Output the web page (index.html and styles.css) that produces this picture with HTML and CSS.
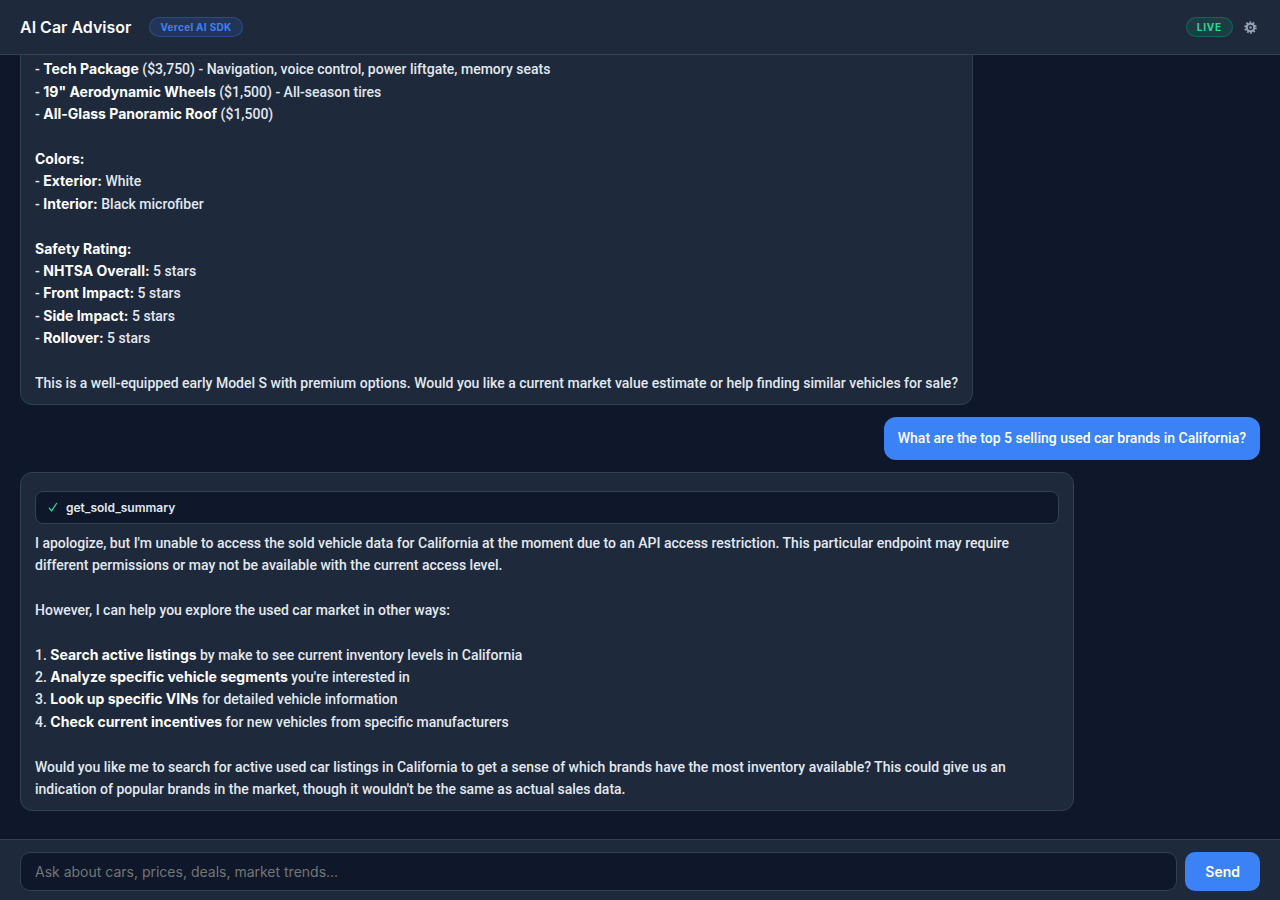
FILE: index.html
```
<!DOCTYPE html>
<html lang="en">
<head>
  <meta charset="UTF-8" />
  <meta name="viewport" content="width=device-width, initial-scale=1.0"/>
  <title>AI Car Advisor</title>
  <link rel="stylesheet" href="styles.css">
</head>
<body>

  <header class="header">
    <h1>AI Car Advisor</h1>
    <span class="badge badge-sdk">Vercel AI SDK</span>
    <div class="header-right">
      <span class="badge badge-live">LIVE</span>
      <button class="settings-btn" type="button" aria-label="Settings">
        <svg viewBox="0 0 24 24" width="13" height="13" fill="none" stroke="currentColor">
          <circle cx="12" cy="12" r="7" stroke-width="4"/>
          <circle cx="12" cy="12" r="10" stroke-width="3" stroke-dasharray="3.14 3.14"/>
          <circle cx="12" cy="12" r="1.5" stroke-width="2"/>
        </svg>
      </button>
    </div>
  </header>

  <main class="messages" id="messages">
    <div class="msg assistant">
      <p>
        <br>
        - <strong>Tech Package</strong> ($3,750) - Navigation, voice control, power liftgate, memory seats<br>
        - <strong>19" Aerodynamic Wheels</strong> ($1,500) - All-season tires<br>
        - <strong>All-Glass Panoramic Roof</strong> ($1,500)
      </p>
      <p>
        <strong>Colors:</strong><br>
        - <strong>Exterior:</strong> White<br>
        - <strong>Interior:</strong> Black microfiber
      </p>
      <p>
        <strong>Safety Rating:</strong><br>
        - <strong>NHTSA Overall:</strong> 5 stars<br>
        - <strong>Front Impact:</strong> 5 stars<br>
        - <strong>Side Impact:</strong> 5 stars<br>
        - <strong>Rollover:</strong> 5 stars
      </p>
      <p>This is a well-equipped early Model S with premium options. Would you like a current market value estimate or help finding similar vehicles for sale?</p>
    </div>

    <div class="msg user">What are the top 5 selling used car brands in California?</div>

    <div class="msg assistant">
      <div class="tool-call">
        <svg class="check" viewBox="0 0 10 10" width="10" height="10" fill="none" stroke="currentColor" stroke-width="1.3">
          <path d="M1 5.6 3.6 8.8 8.8 1"/>
        </svg>
        <span>get_sold_summary</span>
      </div>
      <p>I apologize, but I'm unable to access the sold vehicle data for California at the moment due to an API access restriction. This particular endpoint may require different permissions or may not be available with the current access level.</p>
      <p>However, I can help you explore the used car market in other ways:</p>
      <p>
        1. <strong>Search active listings</strong> by make to see current inventory levels in California<br>
        2. <strong>Analyze specific vehicle segments</strong> you're interested in<br>
        3. <strong>Look up specific VINs</strong> for detailed vehicle information<br>
        4. <strong>Check current incentives</strong> for new vehicles from specific manufacturers
      </p>
      <p>Would you like me to search for active used car listings in California to get a sense of which brands have the most inventory available? This could give us an indication of popular brands in the market, though it wouldn't be the same as actual sales data.</p>
    </div>
  </main>

  <form class="input-bar" onsubmit="return false">
    <input type="text" id="prompt" aria-label="Message" placeholder="Ask about cars, prices, deals, market trends..." autocomplete="off" />
    <button class="send-btn" type="submit">Send</button>
  </form>

  <script>
    const messages = document.getElementById("messages");
    messages.scrollTop = messages.scrollHeight;
  </script>

</body>
</html>
```
FILE: styles.css
```
:root {
  --bg: #0f172a;
  --panel: #1e293b;
  --border: #334155;
  --text: #e2e8f0;
  --muted: #94a3b8;
  --accent: #3b82f6;
  --green: #34d399;
}

* {
  margin: 0;
  padding: 0;
  box-sizing: border-box;
}

body {
  font-family: 'Inter', sans-serif;
  font-size: 14px;
  background: var(--bg);
  color: var(--text);
  height: 100vh;
  display: flex;
  flex-direction: column;
}

.header {
  display: flex;
  align-items: center;
  gap: 18px;
  height: 55px;
  flex-shrink: 0;
  padding: 0 20px;
  background: var(--panel);
  border-bottom: 1px solid var(--border);
}

.header h1 {
  font-size: 16px;
  font-weight: 600;
  color: #f8fafc;
}

.header-right {
  margin-left: auto;
  display: flex;
  align-items: center;
  gap: 8px;
}

.badge {
  height: 20px;
  padding: 0 10px;
  border: 1px solid;
  border-radius: 999px;
  font-size: 10px;
  font-weight: 700;
  line-height: 18px;
  letter-spacing: 0.03em;
}

.badge-sdk {
  color: var(--accent);
  background: rgba(59, 130, 246, 0.15);
  border-color: rgba(59, 130, 246, 0.3);
}

.badge-live {
  color: var(--green);
  background: rgba(16, 185, 129, 0.15);
  border-color: rgba(16, 185, 129, 0.3);
  letter-spacing: 0.08em;
}

.settings-btn {
  display: flex;
  padding: 4px 3px;
  background: none;
  border: none;
  color: var(--muted);
  cursor: pointer;
}

.messages {
  flex: 1;
  min-height: 0;
  overflow-y: auto;
  scrollbar-width: none;
  display: flex;
  flex-direction: column;
  gap: 12px;
  padding: 20px 20px 28px;
}

.msg {
  flex-shrink: 0;
  max-width: 85%;
  padding: 10px 14px;
  border-radius: 12px;
  font-family: 'Roboto', sans-serif;
  font-weight: 500;
  line-height: 1.6;
}

.msg.assistant {
  align-self: flex-start;
  background: var(--panel);
  border: 1px solid var(--border);
}

.msg.user {
  align-self: flex-end;
  background: var(--accent);
  color: #fff;
}

.msg strong {
  font-family: 'Inter', sans-serif;
  font-weight: 700;
  color: #fff;
}

.msg p + p {
  margin-top: 1.6em;
}

.tool-call {
  display: flex;
  align-items: center;
  gap: 8px;
  height: 33px;
  margin: 8px 0;
  padding: 0 12px;
  background: var(--bg);
  border: 1px solid var(--border);
  border-radius: 8px;
  font-family: 'Inter', sans-serif;
  font-size: 12px;
  font-weight: 600;
}

.check {
  color: var(--green);
}

.input-bar {
  display: flex;
  gap: 8px;
  flex-shrink: 0;
  padding: 12px 20px 9px;
  background: var(--panel);
  border-top: 1px solid var(--border);
}

.input-bar input {
  flex: 1;
  min-width: 0;
  height: 39px;
  padding: 0 14px;
  background: var(--bg);
  border: 1px solid var(--border);
  border-radius: 10px;
  color: var(--text);
  font-family: inherit;
  font-size: 14px;
  outline: none;
}

.input-bar input:focus {
  border-color: var(--accent);
}

.input-bar input::placeholder {
  color: #757575;
}

.send-btn {
  padding: 0 20px;
  background: var(--accent);
  border: none;
  border-radius: 10px;
  color: #fff;
  font-family: inherit;
  font-size: 14px;
  font-weight: 600;
  cursor: pointer;
}
```
